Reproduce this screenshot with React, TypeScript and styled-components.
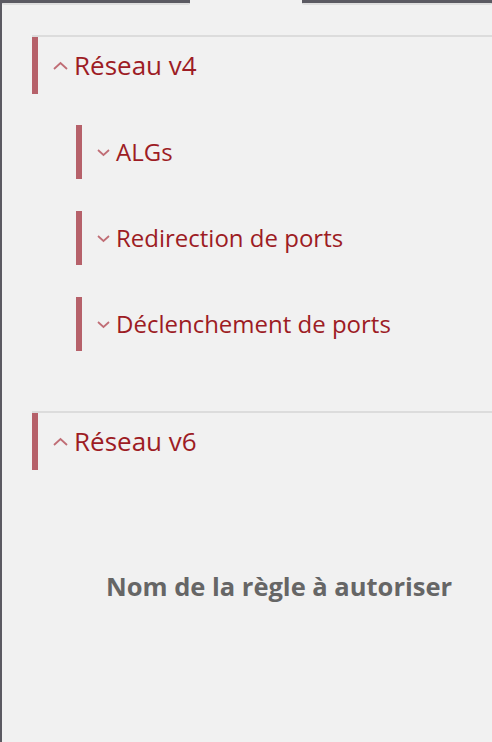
import React from "react";
import styled, { createGlobalStyle } from "styled-components";

const Global = createGlobalStyle`
  html, body { margin: 0; padding: 0; background: #f1f1f1; }
  body { font-family: "Open Sans", "Noto Sans", sans-serif; }
`;

const Frame = styled.div`
  min-height: 742px;
  border-left: 2px solid #5b5a62;
  box-sizing: border-box;
  background: #f1f1f1;
  overflow: hidden;
`;

const TabStrip = styled.div`
  display: flex;
  height: 5px;
`;

const TabEdge = styled.div<{ $w?: number }>`
  ${(p) => (p.$w ? `width: ${p.$w}px;` : "flex: 1;")}
  height: 3px;
  background: #5b5a62;
  border-bottom: 2px solid #dedede;
  border-radius: 0 0 2px 2px;
`;

const ActiveTab = styled.div`
  width: 112px;
`;

const Content = styled.div`
  padding: 30px 0 0 30px;
`;

const Section = styled.section<{ $mt?: number }>`
  border-top: 2px solid #dcdcdc;
  margin-top: ${(p) => p.$mt ?? 0}px;
`;

const Header = styled.div<{ $h: number; $level: number }>`
  display: flex;
  align-items: center;
  height: ${(p) => p.$h}px;
  border-left: 6px solid #b6616a;
  padding-left: 15px;
  gap: 6px;
  color: #9d1c24;
  font-size: ${(p) => (p.$level === 0 ? 26 : 24)}px;
  line-height: 1;
  cursor: pointer;
`;

const Title = styled.span<{ $pb: number }>`
  white-space: nowrap;
  padding-bottom: ${(p) => p.$pb}px;
`;

const SubList = styled.div`
  padding: 31px 0 0 44px;
  display: flex;
  flex-direction: column;
  gap: 32px;
`;

const RuleLabel = styled.div`
  margin-top: 99px;
  padding-left: 74px;
  color: #666666;
  font-weight: 700;
  font-size: 25.5px;
  white-space: nowrap;
`;

const Chevron = ({ up }: { up?: boolean }) => (
  <svg width={up ? 15 : 13} height={9} viewBox={up ? "0 0 15 9" : "0 0 13 9"} fill="none">
    {up ? (
      <polyline points="1,8 7.5,2 14,8" stroke="#c06d75" strokeWidth="1.8" />
    ) : (
      <polyline points="1,2 6.5,7 12,2" stroke="#c06d75" strokeWidth="1.7" />
    )}
  </svg>
);

const subs = ["ALGs", "Redirection de ports", "Déclenchement de ports"];

export default function App() {
  return (
    <>
      <Global />
      <Frame>
        <TabStrip>
          <TabEdge $w={188} />
          <ActiveTab />
          <TabEdge />
        </TabStrip>
        <Content>
          <Section>
            <Header $h={57} $level={0}>
              <Chevron up />
              <Title $pb={2}>Réseau v4</Title>
            </Header>
            <SubList>
              {subs.map((s) => (
                <Header key={s} $h={54} $level={1}>
                  <Chevron />
                  <Title $pb={0}>{s}</Title>
                </Header>
              ))}
            </SubList>
          </Section>
          <Section $mt={60}>
            <Header $h={57} $level={0}>
              <Chevron up />
              <Title $pb={2}>Réseau v6</Title>
            </Header>
          </Section>
          <RuleLabel>Nom de la règle à autoriser</RuleLabel>
        </Content>
      </Frame>
    </>
  );
}
